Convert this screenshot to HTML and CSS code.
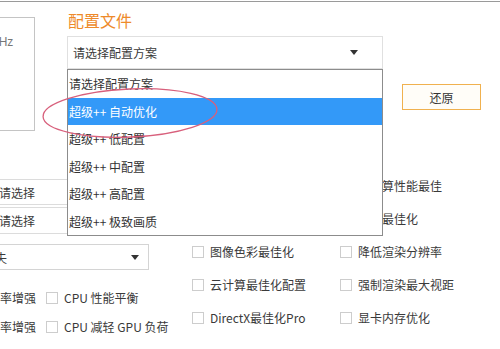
FILE: index.html
```html
<!DOCTYPE html>
<html lang="zh-CN">
<head>
  <meta charset="UTF-8" />
  <title>配置文件</title>
  <link rel="stylesheet" href="styles.css">
</head>
<body>
  <div class="window">
    <div class="top">
      <div class="cpu-box">
        <div class="cpu-freq">3.60GHz</div>
      </div>

      <div class="config">
        <h2>配置文件</h2>
        <div class="select select-main">
          <span>请选择配置方案</span>
          <span class="arrow"></span>
        </div>
      </div>

      <button class="btn-restore">还原</button>
    </div>

    <div class="settings">
      <div class="col col-left">
        <div class="select select-small"><span>请选择</span></div>
        <div class="select select-small tall"><span>请选择</span></div>
        <div class="select select-small dim">
          <span>丢失</span>
          <span class="arrow"></span>
        </div>
        <div class="check-grid">
          <label class="check"><span class="box"></span>帧率增强</label>
          <label class="check"><span class="box"></span>CPU 性能平衡</label>
          <label class="check"><span class="box"></span>帧率增强</label>
          <label class="check"><span class="box"></span>CPU 减轻 GPU 负荷</label>
        </div>
      </div>

      <div class="col col-mid">
        <label class="check row"><span class="box"></span>图像色彩最佳化</label>
        <label class="check row"><span class="box"></span>云计算最佳化配置</label>
        <label class="check row"><span class="box"></span>DirectX最佳化Pro</label>
      </div>

      <div class="col col-right">
        <label class="check row"><span class="box"></span>云计算性能最佳</label>
        <label class="check row"><span class="box"></span>画面最佳化</label>
        <label class="check row"><span class="box"></span>降低渲染分辨率</label>
        <label class="check row"><span class="box"></span>强制渲染最大视距</label>
        <label class="check row"><span class="box"></span>显卡内存优化</label>
      </div>
    </div>

    <ul class="dropdown">
      <li>请选择配置方案</li>
      <li class="active">超级++ 自动优化</li>
      <li>超级++ 低配置</li>
      <li>超级++ 中配置</li>
      <li>超级++ 高配置</li>
      <li>超级++ 极致画质</li>
    </ul>

    <svg class="mark" width="190" height="62" viewBox="0 0 190 62">
      <ellipse cx="92" cy="30" rx="87" ry="24" fill="none" stroke="#d8607c" stroke-width="1.3" transform="rotate(-2.5 92 30)"/>
    </svg>
  </div>
</body>
</html>
```

FILE: styles.css
```css
* {
  box-sizing: border-box;
  margin: 0;
  padding: 0;
}

body {
  font-family: "Noto Sans CJK SC", "Noto Sans", sans-serif;
  font-size: 12px;
  color: #3a3a3a;
  background: #fff;
  overflow: hidden;
}

.window {
  position: relative;
  width: 500px;
  height: 349px;
  border-top: 1px solid #fff;
  overflow: hidden;
}

.window::before {
  content: "";
  display: block;
  height: 1px;
  background: #9a9a9a;
}

/* top area */
.top {
  display: flex;
  align-items: flex-start;
  height: 167px;
}

.cpu-box {
  width: 95px;
  height: 114px;
  margin: 15px 0 0 -60px;
  border: 1px solid #c4c4c4;
}

.cpu-freq {
  padding: 17px 0 0 25px;
  color: #777;
  font-family: "Liberation Sans", sans-serif;
  font-size: 12px;
}

.config {
  width: 316px;
  margin-left: 32px;
}

h2 {
  font-size: 16px;
  font-weight: normal;
  color: #ee8a2a;
  line-height: 20px;
  margin: 8px 0 6px 1px;
}

.select {
  display: flex;
  align-items: center;
  justify-content: space-between;
  border: 1px solid #e0e0e0;
  background: #fff;
}

.select-main {
  height: 33px;
  padding: 0 24px 0 5px;
}

.arrow {
  width: 0;
  height: 0;
  border-left: 4px solid transparent;
  border-right: 4px solid transparent;
  border-top: 5px solid #333;
}

.btn-restore {
  width: 79px;
  height: 26px;
  margin: 82px 0 0 19px;
  border: 1px solid #f0b14f;
  background: #fffdf8;
  color: #333;
  font-family: inherit;
  font-size: 12px;
}

/* settings grid */
.settings {
  display: grid;
  grid-template-columns: 192px 148px 1fr;
}

.col-left {
  margin-left: -30px;
  padding-top: 10px;
}

.select-small {
  width: 179px;
  height: 26px;
  padding: 0 9px 0 28px;
  border-color: #dcdcdc;
  margin-bottom: 2px;
}

.select-small.tall {
  height: 27px;
  margin-bottom: 10px;
}

.select-small.dim {
  padding-left: 12px;
  border-color: #d4d4d4;
}

.check-grid {
  display: grid;
  grid-template-columns: 76px auto;
  margin-top: 13px;
}

.check {
  display: flex;
  align-items: center;
  gap: 6px;
  height: 29px;
  white-space: nowrap;
}

.box {
  flex: none;
  width: 12px;
  height: 12px;
  border: 1px solid #cdcdcd;
  background: #fff;
}

.check.row {
  height: 33px;
}

.col-mid {
  padding-top: 66px;
}

/* open dropdown list */
.dropdown {
  position: absolute;
  left: 67px;
  top: 68px;
  width: 316px;
  list-style: none;
  background: #fff;
  border: 1px solid #8c8c8c;
}

.dropdown li {
  height: 27.5px;
  line-height: 27.5px;
  padding-left: 1px;
  color: #333;
}

.dropdown li.active {
  background: #3399f8;
  color: #fff;
}

/* red annotation ring */
.mark {
  position: absolute;
  left: 38px;
  top: 82px;
}
```
